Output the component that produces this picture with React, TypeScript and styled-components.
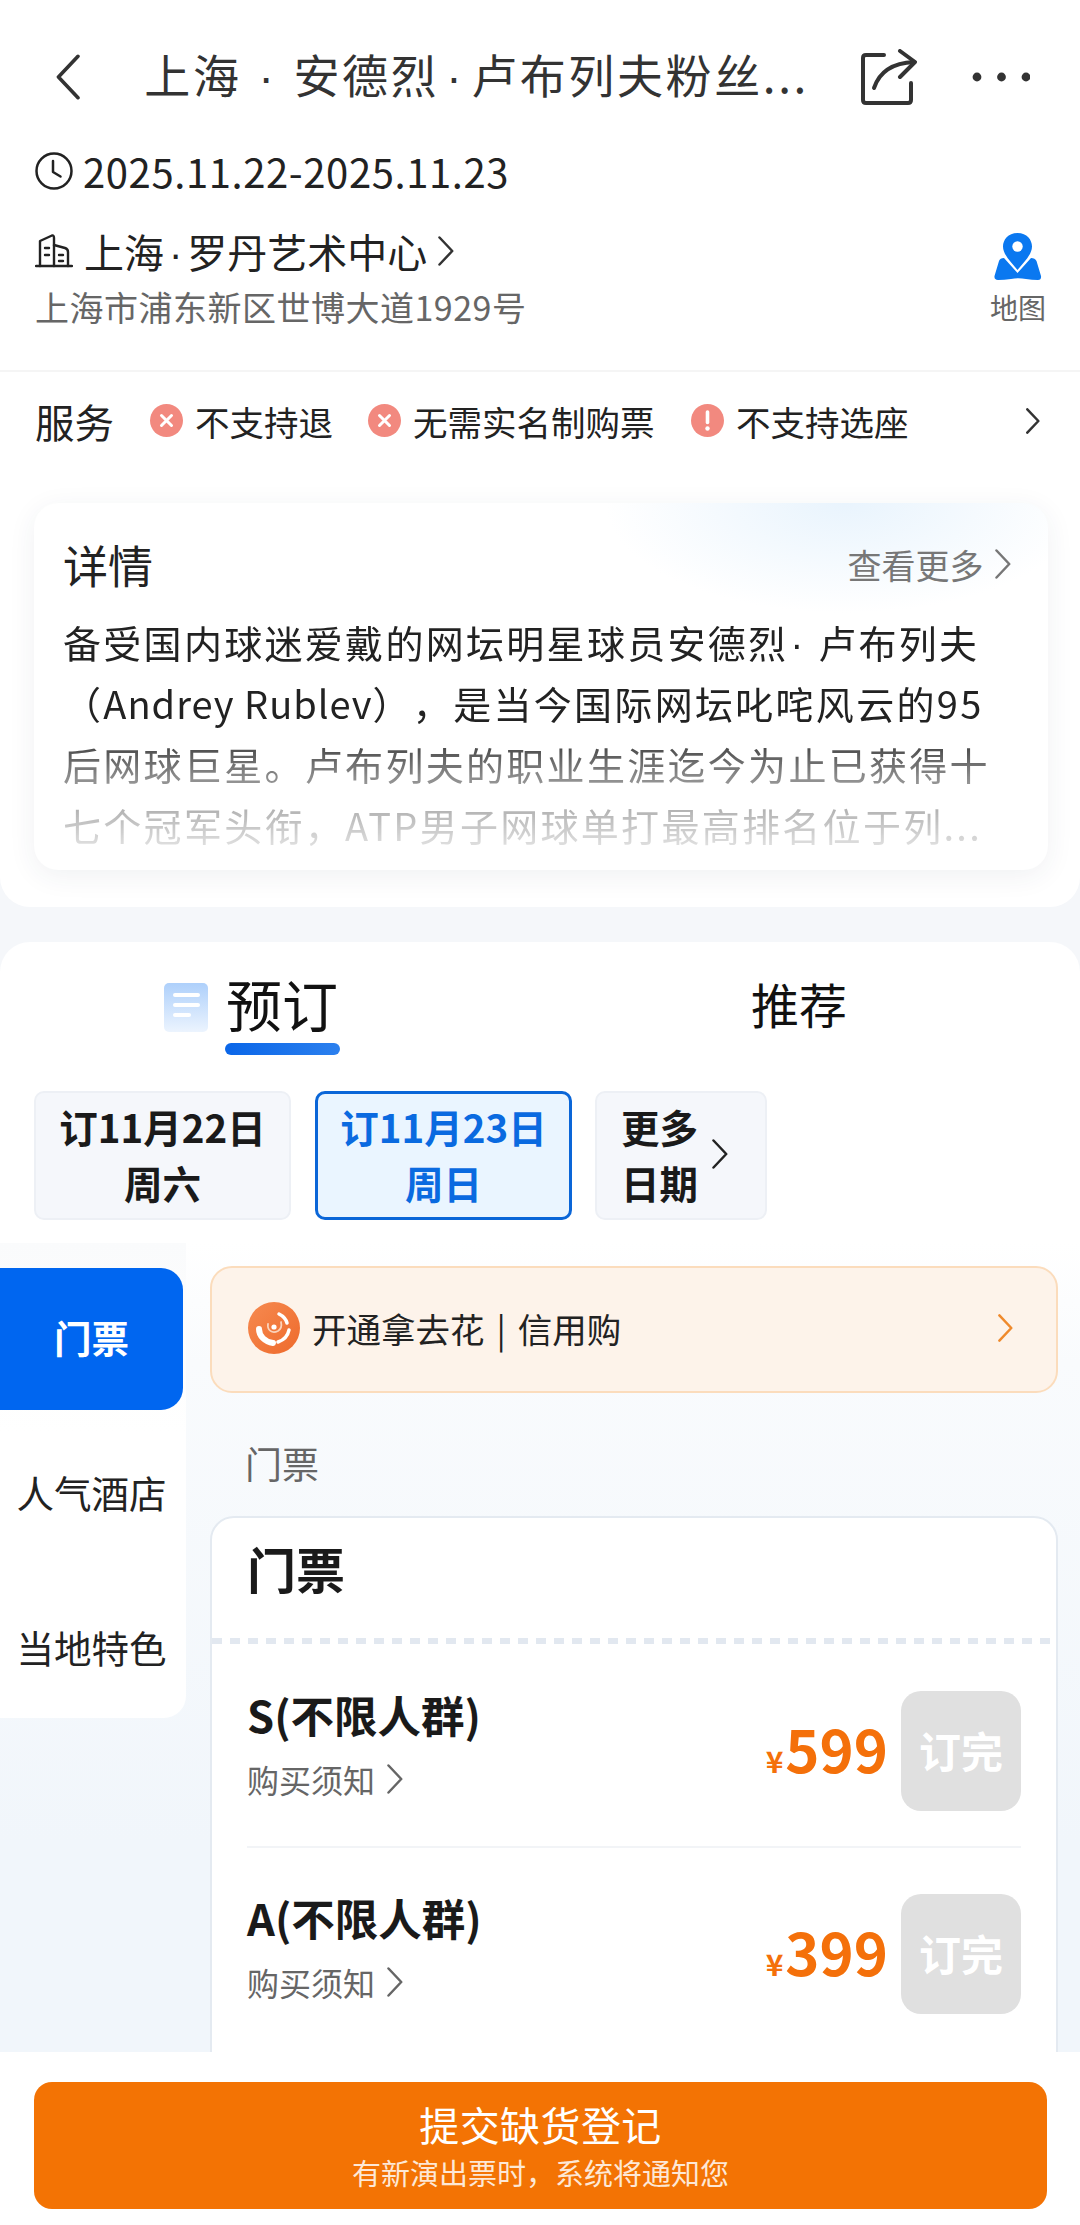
import React from "react";
import styled, { createGlobalStyle } from "styled-components";

const Global = createGlobalStyle`
  html, body { margin: 0; padding: 0; background: #f5f7fa; }
  * { box-sizing: border-box; }
  body { font-family: "Noto Sans CJK SC", "Noto Sans", sans-serif; color: #1a1a1a; text-spacing-trim: space-all; }
`;

const Page = styled.div`
  width: 1080px;
  height: 2225px;
  overflow: hidden;
  display: flex;
  flex-direction: column;
  background: #f5f7fa;
`;

const InfoSection = styled.section`
  height: 907px;
  flex: none;
  background: #fff;
  border-radius: 0 0 30px 30px;
  display: flex;
  flex-direction: column;
`;

const Dot = styled.span<{ $m: number }>`
  font-family: "Liberation Sans", sans-serif;
  margin: 0 ${(p) => p.$m}px;
`;

const Header = styled.header`
  height: 154px;
  flex: none;
  display: flex;
  align-items: center;
  padding: 0 50px 0 55px;
`;

const Title = styled.h1`
  margin: 0 0 4px 64px;
  width: 668px;
  font-size: 46px;
  font-weight: 400;
  line-height: 60px;
  color: #333;
  letter-spacing: 2.6px;
  white-space: nowrap;
`;

const HeaderIcons = styled.div`
  margin-left: auto;
  display: flex;
  align-items: center;
  gap: 55px;
`;

const DateRow = styled.div`
  height: 40px;
  margin-top: -3px;
  padding-left: 35px;
  display: flex;
  align-items: center;
  gap: 10px;
  font-size: 40px;
  letter-spacing: 0.6px;
  color: #222;
`;

const VenueBlock = styled.div`
  margin-top: 32px;
  padding: 0 34px 0 35px;
  display: flex;
  justify-content: space-between;
  height: 116px;
`;

const VenueText = styled.div`
  display: flex;
  flex-direction: column;
`;

const VenueName = styled.div`
  height: 56px;
  display: flex;
  align-items: center;
  gap: 11px;
  font-size: 40px;
  color: #222;
  white-space: nowrap;
`;

const Address = styled.div`
  height: 56px;
  line-height: 56px;
  font-size: 34px;
  letter-spacing: 0.5px;
  color: #666;
`;

const MapLink = styled.div`
  width: 56px;
  display: flex;
  flex-direction: column;
  align-items: center;
  font-size: 28px;
  color: #666;
`;

const MapLabel = styled.span`
  margin-top: 6px;
  line-height: 40px;
  white-space: nowrap;
`;

const ServiceRow = styled.div`
  margin-top: 31px;
  height: 103px;
  flex: none;
  border-top: 2px solid #f5f5f5;
  padding: 0 40px 4px 35px;
  display: flex;
  align-items: center;
  font-size: 34.5px;
  color: #222;
`;

const ServiceTitle = styled.span`
  font-size: 39.5px;
  width: 115px;
  flex: none;
`;

const ServiceItem = styled.span<{ $w: number }>`
  width: ${(p) => p.$w}px;
  flex: none;
  display: flex;
  align-items: center;
  gap: 12px;
  white-space: nowrap;
`;

const Badge = styled.span`
  width: 33px;
  height: 33px;
  flex: none;
  display: flex;
`;

const ServiceChevron = styled.span`
  margin-left: auto;
  display: flex;
`;

const DetailCard = styled.article`
  margin: 30px 32px 0 34px;
  height: 367px;
  border-radius: 24px;
  padding: 31px 37px 0 29px;
  background:
    radial-gradient(ellipse 240px 110px at 80% 0%, rgba(221, 238, 252, 0.65), rgba(255, 255, 255, 0) 100%),
    #fff;
  box-shadow: 0 6px 28px rgba(40, 60, 90, 0.07);
`;

const DetailHead = styled.div`
  display: flex;
  align-items: center;
  justify-content: space-between;
  height: 60px;
`;

const DetailTitle = styled.h2`
  margin: 0;
  font-size: 45px;
  font-weight: 400;
  color: #222;
`;

const More = styled.span`
  display: flex;
  align-items: center;
  gap: 11px;
  font-size: 34px;
  color: #777;
`;

const DetailBody = styled.div`
  margin-top: 17px;
  font-size: 38px;
  line-height: 61px;
  letter-spacing: 2.3px;
  white-space: nowrap;
  color: #222;
  -webkit-mask-image: linear-gradient(to bottom, #000 0%, #000 48%, rgba(0, 0, 0, 0.52) 68%, rgba(0, 0, 0, 0.12) 98%);
  mask-image: linear-gradient(to bottom, #000 0%, #000 48%, rgba(0, 0, 0, 0.52) 68%, rgba(0, 0, 0, 0.12) 98%);
`;

const Line = styled.div`
  height: 61px;
`;

const Latin = styled.span`
  letter-spacing: 1px;
`;

const BookingSection = styled.section`
  margin-top: 35px;
  height: 1110px;
  flex: none;
  overflow: hidden;
  border-radius: 30px 30px 0 0;
  background: linear-gradient(to bottom, #fff 0, #fff 300px, #f9fbfd 420px, #f1f6fb 900px);
`;

const Tabs = styled.div`
  display: grid;
  grid-template-columns: 540px 540px;
  padding-top: 33px;
`;

const TabMain = styled.div`
  padding-left: 164px;
  display: flex;
  align-items: flex-start;
  gap: 17px;
`;

const TabIconWrap = styled.span`
  margin-top: 8px;
  display: flex;
`;

const TabText = styled.div`
  display: flex;
  flex-direction: column;
  align-items: center;
  width: 114px;
`;

const TabLabel = styled.span<{ $big?: boolean }>`
  font-size: ${(p) => (p.$big ? 56 : 48)}px;
  font-weight: 400;
  line-height: 56px;
  color: #111;
  white-space: nowrap;
`;

const TabBar = styled.span`
  margin-top: 12px;
  width: 115px;
  height: 12px;
  border-radius: 6px;
  background: linear-gradient(to right, #0a66e8, #2c80ee);
`;

const TabSecond = styled.div`
  padding-left: 211px;
`;

const DateButtons = styled.div`
  margin-top: 36px;
  padding-left: 34px;
  display: flex;
  gap: 24px;
  height: 129px;
`;

const DateButton = styled.button<{ $active?: boolean; $w?: number }>`
  width: ${(p) => p.$w ?? 257}px;
  height: 129px;
  padding: 0 0 3px;
  border-radius: 10px;
  border: ${(p) => (p.$active ? "3px solid #0a66d8" : "2px solid #edf0f5")};
  background: ${(p) => (p.$active ? "#eaf5ff" : "#f5f7fb")};
  color: ${(p) => (p.$active ? "#0a6ae0" : "#1a1a1a")};
  font: 700 38.5px/56px "Noto Sans CJK SC", sans-serif;
  display: flex;
  align-items: center;
  justify-content: center;
  gap: 14px;
`;

const MoreDates = styled(DateButton)`
  margin-left: -1px;
  justify-content: flex-start;
  padding-left: 24px;
`;

const Body = styled.div`
  margin-top: 23px;
  display: grid;
  grid-template-columns: 186px 848px;
  column-gap: 24px;
  align-items: start;
`;

const SideNav = styled.nav`
  height: 475px;
  padding-top: 25px;
  background: linear-gradient(to bottom, #fafbfc, #fff 40%);
  border-radius: 0 0 22px 0;
  display: flex;
  flex-direction: column;
  gap: 13px;
`;

const NavItem = styled.div<{ $active?: boolean }>`
  width: 183px;
  height: 142px;
  flex: none;
  padding-bottom: 5px;
  display: flex;
  align-items: center;
  justify-content: center;
  font-size: 37.5px;
  font-weight: ${(p) => (p.$active ? 700 : 400)};
  color: ${(p) => (p.$active ? "#fff" : "#222")};
  background: ${(p) => (p.$active ? "#0066f0" : "transparent")};
  border-radius: 0 22px 22px 0;
  white-space: nowrap;
`;

const RightCol = styled.div`
  padding-top: 23px;
`;

const Promo = styled.div`
  height: 127px;
  border: 2px solid #fbdcbc;
  border-radius: 22px;
  background: #fdf3ea;
  padding: 0 43px 3px 36px;
  display: flex;
  align-items: center;
  gap: 12px;
  font-size: 34.5px;
  color: #222;
  white-space: nowrap;
`;

const Pipe = styled.span`
  margin: 0 12px;
`;

const PromoChevron = styled.span`
  margin-left: auto;
  display: flex;
`;

const SectionLabel = styled.div`
  margin-top: 47px;
  padding-left: 35px;
  height: 46px;
  line-height: 46px;
  font-size: 37px;
  color: #666;
`;

const TicketCard = styled.div`
  margin-top: 30px;
  height: 700px;
  background: #fff;
  border: 2px solid #e4eaf1;
  border-radius: 24px;
  padding-top: 25px;
`;

const TicketTitle = styled.h3`
  margin: 0;
  padding-left: 35px;
  height: 95px;
  font-size: 49px;
  line-height: 50px;
  font-weight: 700;
  color: #1a1a1a;
`;

const Dashes = styled.div`
  height: 6px;
  margin-bottom: 1px;
  background: repeating-linear-gradient(to right, #e2e8f0 0 10px, transparent 10px 18px);
`;

const TicketRow = styled.div`
  margin: 0 35px;
  padding: 46px 0 35px;
  display: flex;
  align-items: flex-start;
  justify-content: space-between;
  & + & {
    border-top: 2px solid #f2f4f7;
  }
`;

const TicketInfo = styled.div`
  display: flex;
  flex-direction: column;
`;

const TicketName = styled.div`
  font-size: 43.5px;
  line-height: 48px;
  font-weight: 700;
  color: #1a1a1a;
`;

const Notice = styled.div`
  margin-top: 18px;
  height: 44px;
  display: flex;
  align-items: center;
  gap: 12px;
  font-size: 32px;
  color: #666;
`;

const Buy = styled.div`
  display: flex;
  align-items: center;
  gap: 13px;
  height: 120px;
`;

const Price = styled.div`
  display: flex;
  align-items: baseline;
  color: #f4700a;
  font-weight: 700;
  font-size: 58px;
  line-height: 70px;
  padding-top: 5px;
`;

const Yen = styled.span`
  font-size: 30px;
  margin-right: 2px;
`;

const SoldOut = styled.div`
  width: 120px;
  height: 120px;
  padding-bottom: 4px;
  border-radius: 20px;
  background: #e0e0e0;
  color: #fff;
  font-size: 42px;
  font-weight: 700;
  display: flex;
  align-items: center;
  justify-content: center;
`;

const BottomBar = styled.footer`
  height: 173px;
  flex: none;
  background: #fff;
  padding: 30px 33px 0 34px;
`;

const Submit = styled.button`
  width: 100%;
  height: 127px;
  border: 0;
  border-radius: 18px;
  background: #f37304;
  color: #fff;
  font-family: "Noto Sans CJK SC", sans-serif;
  display: flex;
  flex-direction: column;
  align-items: center;
`;

const SubmitMain = styled.span`
  margin-top: 15px;
  font-size: 40px;
  line-height: 52px;
  letter-spacing: 0.4px;
`;

const SubmitSub = styled.span`
  margin-top: 2px;
  font-size: 29px;
  line-height: 40px;
  color: #fde8d6;
`;

const Chevron = ({ h, color = "#333", w = 2.5, left }: { h: number; color?: string; w?: number; left?: boolean }) => (
  <svg width={h * 0.55} height={h} viewBox="0 0 11 20" fill="none">
    <path
      d={left ? "M10 1 L1.5 10 L10 19" : "M1 1 L9.5 10 L1 19"}
      stroke={color}
      strokeWidth={w * (20 / h)}
      strokeLinecap="round"
      strokeLinejoin="round"
    />
  </svg>
);

const ShareIcon = () => (
  <svg width="56" height="56" viewBox="0 0 56 56" fill="none" stroke="#333" strokeWidth="4" strokeLinecap="round" strokeLinejoin="round">
    <path d="M23 6 H5 Q2 6 2 9 V51 Q2 54 5 54 H47 Q50 54 50 51 V34" />
    <path d="M13 39 C18 24 30 14 53 13" />
    <path d="M39 2 L54 13 L39 28" />
  </svg>
);

const Dots = () => (
  <svg width="58" height="10" viewBox="0 0 58 10" fill="#333">
    <circle cx="5" cy="5" r="4.4" />
    <circle cx="29.5" cy="5" r="4.4" />
    <circle cx="54" cy="5" r="4.4" />
  </svg>
);

const Clock = () => (
  <svg width="38" height="38" viewBox="0 0 38 38" fill="none" stroke="#222" strokeWidth="2.5" strokeLinecap="round" strokeLinejoin="round">
    <circle cx="19" cy="19" r="17.5" />
    <path d="M18 9 V20 L25.5 24.5" />
  </svg>
);

const Building = () => (
  <svg width="38" height="34" viewBox="0 0 38 34" fill="none" stroke="#222" strokeWidth="2.4" strokeLinecap="round" strokeLinejoin="round">
    <path d="M1 32 H37" />
    <path d="M5 32 V7 L17 1.5 Q19 1 19 4 V32" />
    <path d="M19 11 L30 14 Q33 15 33 18 V32" />
    <path d="M10 14 H14 M10 21 H14 M24 21 H28 M24 27 H28" />
  </svg>
);

const MapPin = () => (
  <svg width="48" height="48" viewBox="0 0 48 48" style={{ marginTop: 10 }}>
    <path
      d="M0.5 43 L5 28 Q6 25 10 25 L23.5 40 L37 25 Q41 25 42.5 28 L47 43 Q47.5 47 44 47 Q38 47 32 46 Q24 44.5 17 46 Q10 47 4 47 Q0 47 0.5 43 Z"
      fill="#0a78f0"
    />
    <path d="M23.5 0 C14 0 9 7 9 13.5 C9 22 18 30 23.5 37 C29 30 38 22 38 13.5 C38 7 33 0 23.5 0 Z" fill="#0a78f0" />
    <circle cx="23.5" cy="13.5" r="5.2" fill="#fff" />
  </svg>
);

const XBadge = () => (
  <Badge>
    <svg width="33" height="33" viewBox="0 0 33 33">
      <circle cx="16.5" cy="16.5" r="16.5" fill="#f2897f" />
      <path d="M11.5 11.5 L21.5 21.5 M21.5 11.5 L11.5 21.5" stroke="#fff" strokeWidth="3" strokeLinecap="round" />
    </svg>
  </Badge>
);

const WarnBadge = () => (
  <Badge>
    <svg width="33" height="33" viewBox="0 0 33 33">
      <circle cx="16.5" cy="16.5" r="16.5" fill="#f2897f" />
      <path d="M16.5 8 V18.5" stroke="#fff" strokeWidth="3.6" strokeLinecap="round" />
      <circle cx="16.5" cy="24.5" r="2.2" fill="#fff" />
    </svg>
  </Badge>
);

const TabIcon = () => (
  <svg width="44" height="49" viewBox="0 0 44 49">
    <defs>
      <linearGradient id="tabIconFill" x1="0" y1="0" x2="0" y2="1">
        <stop offset="0" stopColor="#aed0fb" />
        <stop offset="1" stopColor="#ecf4fe" />
      </linearGradient>
    </defs>
    <rect width="44" height="49" rx="5" fill="url(#tabIconFill)" />
    <rect x="9" y="10" width="27" height="4" rx="2" fill="#fff" />
    <rect x="9" y="20" width="27" height="4" rx="2" fill="#fff" />
    <rect x="9" y="30" width="18" height="4" rx="2" fill="#fff" />
  </svg>
);

const PromoLogo = () => (
  <svg width="52" height="52" viewBox="0 0 52 52">
    <defs>
      <linearGradient id="promoLogoFill" x1="0" y1="0" x2="1" y2="1">
        <stop offset="0" stopColor="#f68a50" />
        <stop offset="1" stopColor="#ee6a2c" />
      </linearGradient>
    </defs>
    <circle cx="26" cy="26" r="26" fill="url(#promoLogoFill)" />
    <g fill="none" stroke="#fff" strokeLinecap="round">
      <path d="M11 27 C11 34 17 40 25 41" strokeWidth="6" />
      <path d="M30 40 C36 38 40 33 41 28" strokeWidth="3.5" />
      <path d="M31 12 C35 14 38 17 39 21" strokeWidth="3.5" />
    </g>
    <path d="M20 22 C19 28 24 32 30 29 C33 27 34 24 33 20" fill="none" strokeWidth="1.8" stroke="#fbd3bb" strokeLinecap="round" />
    <circle cx="26" cy="25" r="2.6" fill="#fff" />
  </svg>
);

const tickets = [
  { name: "S(不限人群)", price: "599" },
  { name: "A(不限人群)", price: "399" },
];

export default function App() {
  return (
    <Page lang="zh-CN">
      <Global />
      <InfoSection>
        <Header>
          <Chevron h={46} left w={3.6} />
          <Title>上海<Dot $m={17}>·</Dot>安德烈<Dot $m={7}>·</Dot>卢布列夫粉丝...</Title>
          <HeaderIcons>
            <ShareIcon />
            <Dots />
          </HeaderIcons>
        </Header>
        <DateRow>
          <Clock />
          2025.11.22-2025.11.23
        </DateRow>
        <VenueBlock>
          <VenueText>
            <VenueName>
              <Building />
              <span>上海<Dot $m={5}>·</Dot>罗丹艺术中心</span>
              <Chevron h={30} />
            </VenueName>
            <Address>上海市浦东新区世博大道1929号</Address>
          </VenueText>
          <MapLink>
            <MapPin />
            <MapLabel>地图</MapLabel>
          </MapLink>
        </VenueBlock>
        <ServiceRow>
          <ServiceTitle>服务</ServiceTitle>
          <ServiceItem $w={218}><XBadge />不支持退</ServiceItem>
          <ServiceItem $w={323}><XBadge />无需实名制购票</ServiceItem>
          <ServiceItem $w={250}><WarnBadge />不支持选座</ServiceItem>
          <ServiceChevron><Chevron h={26} /></ServiceChevron>
        </ServiceRow>
        <DetailCard>
          <DetailHead>
            <DetailTitle>详情</DetailTitle>
            <More>查看更多<Chevron h={30} color="#777" /></More>
          </DetailHead>
          <DetailBody>
            <Line>备受国内球迷爱戴的网坛明星球员安德烈<Dot $m={2}>·</Dot> 卢布列夫</Line>
            <Line>（<Latin>Andrey Rublev</Latin>），是当今国际网坛叱咤风云的95</Line>
            <Line>后网球巨星。卢布列夫的职业生涯迄今为止已获得十</Line>
            <Line>七个冠军头衔，ATP男子网球单打最高排名位于列...</Line>
          </DetailBody>
        </DetailCard>
      </InfoSection>
      <BookingSection>
        <Tabs>
          <TabMain>
            <TabIconWrap><TabIcon /></TabIconWrap>
            <TabText>
              <TabLabel $big>预订</TabLabel>
              <TabBar />
            </TabText>
          </TabMain>
          <TabSecond>
            <TabLabel>推荐</TabLabel>
          </TabSecond>
        </Tabs>
        <DateButtons>
          <DateButton>订11月22日<br />周六</DateButton>
          <DateButton $active>订11月23日<br />周日</DateButton>
          <MoreDates $w={172}>
            <span>更多<br />日期</span>
            <Chevron h={30} color="#222" />
          </MoreDates>
        </DateButtons>
        <Body>
          <SideNav>
            <NavItem $active>门票</NavItem>
            <NavItem>人气酒店</NavItem>
            <NavItem>当地特色</NavItem>
          </SideNav>
          <RightCol>
            <Promo>
              <PromoLogo />
              <span>开通拿去花<Pipe>|</Pipe>信用购</span>
              <PromoChevron><Chevron h={28} color="#ef8a2c" /></PromoChevron>
            </Promo>
            <SectionLabel>门票</SectionLabel>
            <TicketCard>
              <TicketTitle>门票</TicketTitle>
              <Dashes />
              {tickets.map((t) => (
                <TicketRow key={t.name}>
                  <TicketInfo>
                    <TicketName>{t.name}</TicketName>
                    <Notice>购买须知<Chevron h={30} color="#666" /></Notice>
                  </TicketInfo>
                  <Buy>
                    <Price><Yen>¥</Yen>{t.price}</Price>
                    <SoldOut>订完</SoldOut>
                  </Buy>
                </TicketRow>
              ))}
            </TicketCard>
          </RightCol>
        </Body>
      </BookingSection>
      <BottomBar>
        <Submit>
          <SubmitMain>提交缺货登记</SubmitMain>
          <SubmitSub>有新演出票时，系统将通知您</SubmitSub>
        </Submit>
      </BottomBar>
    </Page>
  );
}
